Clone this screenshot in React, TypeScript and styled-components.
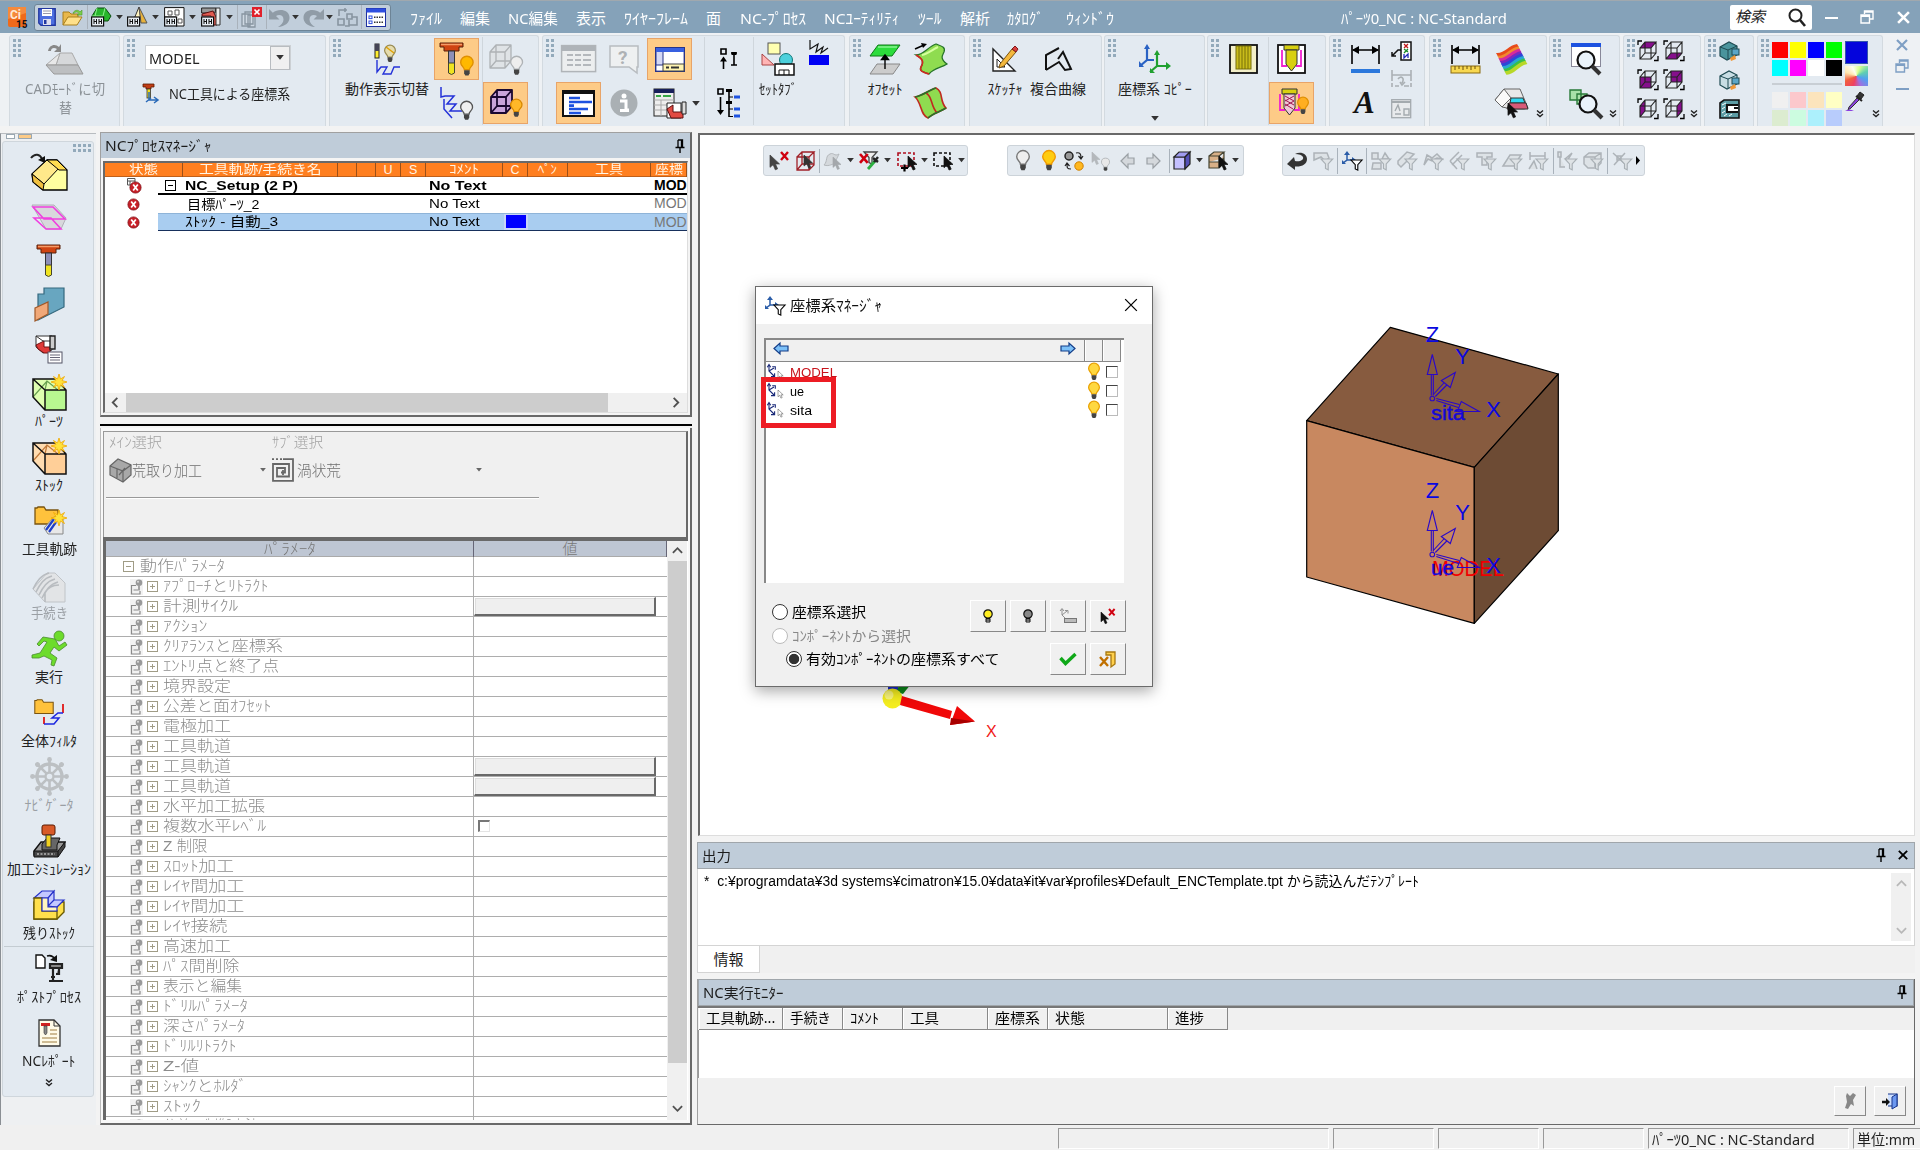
import React, { useLayoutEffect, useRef, useState } from "react";
import styled, { createGlobalStyle, css } from "styled-components";

const UI = `"Noto Sans", "Noto Sans CJK JP", sans-serif`;
const GOTHIC = `"Liberation Sans", "Noto Sans CJK JP", sans-serif`;

const Global = createGlobalStyle`
  * { box-sizing: border-box; }
  body { margin: 0; background: #f0f0f0; font-family: ${UI}; font-size: 14px; color: #222; overflow: hidden; }
  svg { display: block; flex: none; overflow: visible; }
`;

const FitBox = styled.span`
  display: block; flex: none; white-space: pre; line-height: inherit;
`;
const FitInner = styled.span`
  display: inline-block; transform-origin: 0 50%; white-space: pre; vertical-align: top;
`;
function Fit({ w, children }: { w: number; children: React.ReactNode }) {
  const ref = useRef<HTMLSpanElement>(null);
  const [scale, setScale] = useState(1);
  useLayoutEffect(() => {
    if (ref.current) setScale(w / ref.current.offsetWidth);
  }, [w, children]);
  return (
    <FitBox style={{ width: w }}>
      <FitInner ref={ref} style={{ transform: `scaleX(${scale})` }}>{children}</FitInner>
    </FitBox>
  );
}

/* ---------- icons ---------- */
type IP = { w: number; h: number; vb?: string; children?: React.ReactNode };
const Ico = ({ w, h, vb, children }: IP) => (
  <svg width={w} height={h} viewBox={vb || `0 0 ${w} ${h}`} fill="none">{children}</svg>
);
const G = ({ x = 0, y = 0, s = 1, children }: { x?: number; y?: number; s?: number; children: React.ReactNode }) => (
  <g transform={`translate(${x} ${y}) scale(${s})`}>{children}</g>
);
const CursorP = ({ x = 0, y = 0, s = 1, c = "#111", f }: { x?: number; y?: number; s?: number; c?: string; f?: string }) => (
  <G x={x} y={y} s={s}><path d="M0 0V13L3.3 10.2L5.6 15.6L8 14.6L5.7 9.4H10Z" fill={f || c} stroke={c} strokeWidth=".8" /></G>
);
const BulbP = ({ x = 0, y = 0, s = 1, c = "#ffd21c", b = "#e08a00" }: { x?: number; y?: number; s?: number; c?: string; b?: string }) => (
  <G x={x} y={y} s={s}>
    <path d="M3.8 12C3.8 9.5 .6 8.8 .6 5.6A5.4 5.4 0 0 1 11.4 5.6C11.4 8.8 8.2 9.5 8.2 12Z" fill={c} stroke={b} strokeWidth="1.2" />
    <path d="M3.6 12.3H8.4V15L7.4 17H4.6L3.6 15Z" fill="#444" />
  </G>
);
const FunnelP = ({ x = 0, y = 0, s = 1, c = "#a9b0b5", f = "#dfe3e6" }: { x?: number; y?: number; s?: number; c?: string; f?: string }) => (
  <G x={x} y={y} s={s}><path d="M0 0H13L8 5.5V12L5 10.5V5.5Z" fill={f} stroke={c} strokeWidth="1.3" /></G>
);
const RedX = ({ x = 0, y = 0, s = 1 }: { x?: number; y?: number; s?: number }) => (
  <G x={x} y={y} s={s}><path d="M0 0L7 8M7 0L0 8" stroke="#d00010" strokeWidth="2.4" /></G>
);
const Caret = ({ c = "#333", w = 8 }: { c?: string; w?: number }) => (
  <Ico w={w} h={w * 0.6} vb="0 0 8 5"><path d="M0 0H8L4 5Z" fill={c} /></Ico>
);
const Chevrons = () => (
  <Ico w={8} h={8}><path d="M1 .5L4 3L7 .5M1 4L4 6.5L7 4" stroke="#222" strokeWidth="1.4" /></Ico>
);
const Pin = () => (
  <Ico w={10} h={14}><path d="M3 1H7.5V8M3 1V8M6.5 1V8" stroke="#000" strokeWidth="1.3" /><path d="M.5 8.5H9.5M5 9V14" stroke="#000" strokeWidth="1.4" /></Ico>
);
const Cross = ({ s = 12, c = "#000", t = 2 }: { s?: number; c?: string; t?: number }) => (
  <Ico w={s} h={s} vb="0 0 12 12"><path d="M1 1L11 11M11 1L1 11" stroke={c} strokeWidth={t} /></Ico>
);
const Restore = ({ c = "#fff" }: { c?: string }) => (
  <Ico w={14} h={14}><path d="M4.5 4V1H13V9H10M1 5H9.5V13H1ZM1 6.2H9.5M4.5 2H13" stroke={c} strokeWidth="1.4" /></Ico>
);
const Chevron = ({ d, c = "#505050" }: { d: "l" | "r" | "u" | "d"; c?: string }) => {
  const p = { l: "M8 1L3 6L8 11", r: "M4 1L9 6L4 11", u: "M1 8.5L6 3.5L11 8.5", d: "M1 3.5L6 8.5L11 3.5" }[d];
  return <Ico w={11} h={11} vb="0 0 12 12"><path d={p} stroke={c} strokeWidth="2" /></Ico>;
};

const CiLogo = () => (
  <Ico w={19} h={21}>
    <rect width="18" height="20" rx="2" fill="#ef6a1a" />
    <path d="M0 0H18V6L0 12Z" fill="#f58a3c" />
    <text x="2" y="12" fontSize="12" fontWeight="700" fill="#ffe9d4" fontFamily="Roboto, sans-serif">Ci</text>
    <text x="8" y="21" fontSize="10" fontWeight="700" fill="#111" fontFamily="Roboto, sans-serif">15</text>
  </Ico>
);
const SaveI = () => (
  <Ico w={18} h={18}><path d="M.8.8H17.2V17.2H3L.8 15Z" fill="#4d6fe0" stroke="#2237a0" strokeWidth="1.4" /><rect x="4" y="1" width="10" height="7" fill="#fff" /><path d="M5 3H13M5 5.5H13" stroke="#99a" /><rect x="5" y="11" width="8" height="6" fill="#dde" /><rect x="6" y="12" width="2.5" height="4" fill="#2237a0" /></Ico>
);
const OpenI = () => (
  <Ico w={21} h={17}><path d="M1 16V3H7L9 5H16V8" fill="#e9b84c" stroke="#a87f1c" /><path d="M1 16L6 8H20L15 16Z" fill="#ffe08a" stroke="#a87f1c" /><path d="M11 4C13 0 17 1 18 3L20 1V6H15L17 4.5C16 2.5 13 2.5 12 4.5Z" fill="#7ccf4a" stroke="#4c9a28" strokeWidth=".6" /></Ico>
);
const Robot = ({ x = 0, y = 10 }: { x?: number; y?: number }) => (
  <g><rect x={x + .6} y={y} width="12" height="9" fill="#e8eef4" stroke="#111" strokeWidth="1.2" /><path d={`M${x + 3} ${y + 2}V${y + 7}M${x + 5.5} ${y + 2}V${y + 7}M${x + 3} ${y + 4.5}H${x + 5.5}M${x + 8} ${y + 2}V${y + 7}M${x + 10.5} ${y + 2}V${y + 7}M${x + 8} ${y + 4.5}H${x + 10.5}`} stroke="#111" /></g>
);
const NewPart = () => (<Ico w={21} h={20}><path d="M1 9L6 1H14L20 9L17 14H4Z" fill="#27b52b" stroke="#0c4d10" /><path d="M6 1L4 9H1M14 1L12 9H4" stroke="#8cf08c" /><Robot /></Ico>);
const NewAsm = () => (<Ico w={21} h={20}><path d="M12 0L7 12H14Z" fill="#fff3c0" stroke="#333" /><path d="M12 0L20 16H14Z" fill="#e8b23c" stroke="#555" /><Robot /></Ico>);
const NewDrw = () => (<Ico w={21} h={20}><path d="M.6.6H20V19H12V10H.6Z" fill="#fff" stroke="#111" /><path d="M4 4H8V8H4ZM11 3H15V8H11ZM14 12H18V16H14Z" stroke="#555" /><Robot /></Ico>);
const NewNC = () => (<Ico w={21} h={20}><path d="M.6 1H15L14 6H.6Z" fill="#999" stroke="#222" /><path d="M1 7L12 4L16 12V18H12L10 9H1Z" fill="#e05a50" stroke="#5a1010" /><path d="M15 1H19V18H15Z" fill="#eee" stroke="#333" /><Robot /></Ico>);
const CopyX = () => (<Ico w={21} h={21}><path d="M1 7H9V19H1ZM4 5H12V17H4ZM7 8H14V20H7Z" fill="#cfd9e3" stroke="#8794a0" strokeWidth="1.3" /><rect x="11" y="0" width="10" height="10" fill="#e0202a" /><path d="M13.5 2.5L18.5 7.5M18.5 2.5L13.5 7.5" stroke="#fff" strokeWidth="1.6" /></Ico>);
const Undo = ({ flip }: { flip?: boolean }) => (
  <Ico w={21} h={19}><g transform={flip ? "translate(21 0) scale(-1 1)" : undefined}><path d="M0 1V11.5H10.5L7 8C10 6 14.5 7 14.5 11.5C14.5 14.5 12 17 9 19C16 18.5 21 14.5 20.5 9C20 2 10-.5 3.8 4.8Z" fill="#909ca7" /></g></Ico>
);
const GreySwap = () => (<Ico w={21} h={19}><path d="M2 8V2H10M8 0V4M12 12V18H8M1 11H7V17H1ZM10 6H15V11H10ZM15 9H20V17H12" stroke="#8794a0" strokeWidth="1.6" /></Ico>);
const TableBlue = () => (<Ico w={20} h={19}><rect x=".5" y=".5" width="19" height="18" fill="#fff" stroke="#1d2fa0" /><rect x=".5" y=".5" width="19" height="4" fill="#2f4fe0" /><rect x="3" y="8" width="3" height="2.6" stroke="#2f4fe0" /><rect x="3" y="13" width="3" height="2.6" stroke="#2f4fe0" /><path d="M8 9.3H17M8 14.3H17" stroke="#333" strokeDasharray="1.5 1" strokeWidth="1.4" /></Ico>);

const CadI = () => (<Ico w={38} h={32}><path d="M2 8C3 2 9 0 13 4L15 1V9H8L11 6C8 4 5 5 5 8Z" fill="#888" /><path d="M14 10H26L32 22H10Z" fill="#d6d8da" stroke="#aaa" /><path d="M14 10L0 22L10 22Z" fill="#e8e8e8" stroke="#aaa" /><path d="M10 22H32L37 31H8L0 22Z" fill="#bdbfc1" stroke="#999" /></Ico>);
const ToolSmall = () => (<Ico w={16} h={21}><path d="M0 1H11V4H8V6H3V4H0Z" fill="#c23c14" stroke="#5a1a00" strokeWidth=".8" /><rect x="4" y="6" width="3.5" height="9" fill="#f5e020" stroke="#333" strokeWidth=".8" /><path d="M6 9V17H14M3 19L8 15M11 14L15 17L11 20" stroke="#2a6ab8" strokeWidth="1.5" /></Ico>);
const PathBulbBig = () => (<Ico w={29} h={31}><rect x="2" y="0" width="4" height="14" fill="#ffee30" stroke="#222" /><rect x="2" y="0" width="4" height="7" fill="#445" /><path d="M4 16V28L8 23H14L10 30H18L21 23H27" stroke="#2432d8" strokeWidth="1.4" /><BulbP x={11} y={1} c="#e5dcae" b="#988a50" /><path d="M13 3L21 9" stroke="#e0a000" strokeWidth="1.4" /></Ico>);
const ToolP = ({ x = 0, y = 0, s = 1 }: { x?: number; y?: number; s?: number }) => (
  <G x={x} y={y} s={s}><path d="M0 0H23V4H19V8H4V4H0Z" fill="#cf4412" stroke="#58200a" /><path d="M1 1.5H22" stroke="#f59c68" strokeWidth="1.5" /><rect x="8.5" y="8" width="6" height="13" fill="#8d8fb8" stroke="#333" /><path d="M8.5 20H14.5V30Q11.5 33 8.5 30Z" fill="#f0e420" stroke="#443" /></G>
);
const ToolBulb = () => (<Ico w={34} h={33}><ToolP /><BulbP x={20} y={13} s={1.15} c="#ffb800" b="#e09000" /></Ico>);
const ToolI = () => (<Ico w={24} h={32}><ToolP /></Ico>);
const PathBulb = () => (<Ico w={34} h={33}><path d="M1 0V10L5 9H14L7 17H16L10 24H22M4 12V22L12 31" stroke="#2432d8" strokeWidth="1.5" /><BulbP x={20} y={14} s={1.1} c="#f0f0f0" b="#555" /></Ico>);
const CubeP = ({ c = "#999", f = "none", s = 1, x = 0, y = 0, sw = 1.3 }: { c?: string; f?: string; s?: number; x?: number; y?: number; sw?: number }) => (
  <G x={x} y={y} s={s}><path d="M1 8L7 1H22V17L16 24H1Z" fill={f} /><path d="M1 8H16V24H1ZM1 8L7 1H22L16 8M22 1V17L16 24M7 1V17H22M7 17L1 24" stroke={c} strokeWidth={sw} strokeLinejoin="round" /></G>
);
const CubeGrey = () => (<Ico w={33} h={31}><CubeP c="#aeb2b5" f="#dfe3e6" /><BulbP x={21} y={12} s={1.1} c="#eee" b="#aeb2b5" /></Ico>);
const CubePurple = () => (<Ico w={31} h={28}><CubeP c="#1a0830" f="#c9a4da" sw={1.8} /><BulbP x={20} y={10} s={1.05} c="#ffb828" b="#d88800" /></Ico>);
const TableGrey = () => (<Ico w={36} h={28}><rect x=".6" y=".6" width="34" height="26" fill="#eceeef" stroke="#b0b4b8" strokeWidth="1.5" /><rect x="1" y="1" width="33" height="5" fill="#aeb3b8" /><path d="M6 10H12M14 10H20M22 10H30M6 15H12M14 15H20M22 15H30M6 20H12M14 20H20M22 20H30" stroke="#b4b8bc" strokeWidth="2" /></Ico>);
const HelpGrey = () => (<Ico w={30} h={29}><path d="M1 1H29V22H28V28L20 22H1Z" fill="#eef0f1" stroke="#b8bcc0" strokeWidth="1.5" /><text x="9" y="19" fontSize="19" fontWeight="700" fill="#aeb2b5" fontFamily="Roboto, sans-serif">?</text></Ico>);
const GanttI = () => (<Ico w={33} h={27}><rect x="1" y="1" width="31" height="25" fill="#fff" stroke="#111" strokeWidth="2" /><path d="M1 3H32" stroke="#111" strokeWidth="2" /><path d="M7 8H18M7 12H30M7 15.6H12M7 19H26M7 23H19" stroke="#1d52e0" strokeWidth="2.6" /></Ico>);
const InfoGrey = () => (<Ico w={28} h={28}><circle cx="14" cy="14" r="13.5" fill="#aab0b4" /><circle cx="14" cy="7" r="2.5" fill="#fff" /><path d="M10 12H16V21H19M10 21.5H19" stroke="#fff" strokeWidth="3" /></Ico>);
const WindowI = () => (<Ico w={30} h={25}><rect x=".7" y=".7" width="28.6" height="23.6" fill="#fff" stroke="#27348a" strokeWidth="1.4" /><rect x="1" y="1" width="28" height="4" fill="#3860e0" /><path d="M1 5V18H8V5" fill="#d4d8f4" stroke="#27348a" /><rect x="8" y="17" width="21" height="7" fill="#fff4b0" stroke="#444" /><path d="M11 20.5H14M16 20.5H24" stroke="#333" strokeWidth="2" /></Ico>);
const NcTable = () => (<Ico w={34} h={31}><rect x="1" y="1" width="20" height="27" fill="#eee" stroke="#222" /><rect x="1" y="1" width="20" height="4" fill="#18205a" /><path d="M3 8H8M10 8H18" stroke="#38a848" strokeWidth="2" /><path d="M1 12H21M1 17H21M1 22H21M8 12V28" stroke="#aaa" /><path d="M14 15H28V30H14Z" fill="#fff" stroke="#222" /><path d="M14 21L20 17V24H30V30H18Z" fill="#e24a42" stroke="#5a1010" /><path d="M29 14H33V26H29Z" fill="#ddd" stroke="#222" /></Ico>);
const LinkUp = () => (<Ico w={18} h={22}><path d="M1 1H6V6H1ZM3.5 21V11M11 5H17M14 5V17M11 17H17" stroke="#000" strokeWidth="1.6" /><path d="M0 13.5L3.5 8.5L7 13.5Z" fill="#000" /><rect x="11.5" y="4" width="5" height="3" fill="#000" /></Ico>);
const LinkTree = () => (<Ico w={24} h={30}><path d="M1 1H6V6H1ZM3.5 9V25M12 2V29" stroke="#000" strokeWidth="1.6" /><path d="M0 22L3.5 27L7 22Z" fill="#000" /><path d="M9 2.5H15M9 14.5H15" stroke="#000" strokeWidth="3" /><path d="M12 9H16M12 21H16M12 28.5H16" stroke="#000" /><path d="M17 9H23M17 21H23M17 28H23" stroke="#1d52e0" strokeWidth="3" /></Ico>);
const SetTab = () => (<Ico w={34} h={34}><rect x="7" y="1" width="12" height="11" fill="#ffffb0" stroke="#555" /><path d="M1 12V23H13Z" fill="#ffb4b4" stroke="#a44" /><circle cx="25" cy="18" r="6.5" fill="#4cd0dc" stroke="#177" /><path d="M14 22H33V33H14Z" fill="#fff" stroke="#111" strokeWidth="1.5" /><path d="M18 33V28H28V33M23 28V33" stroke="#111" /></Ico>);
const BlueBox = () => (<Ico w={20} h={25}><path d="M1 0V9L9 4L7 12L14 7L12 13L19 8" stroke="#111" strokeWidth="1.2" /><rect x="0" y="15" width="20" height="10" fill="#0000f4" /></Ico>);
const OffsetI = () => (<Ico w={32} h={31}><path d="M9 1H31L23 12H1Z" fill="#2cdc3c" stroke="#107818" /><path d="M9 3H28" stroke="#b4ffb8" /><path d="M8 20H31L24 30H1Z" fill="#ccc" stroke="#888" /><path d="M16 25V13M16 11L12.5 15.5H19.5Z" stroke="#000" strokeWidth="1.4" fill="#000" /></Ico>);
const SurfA = () => (<Ico w={33} h={32}><path d="M2 12C9 12 14 4 22 1C27 3 32 4 30 9C28 13 26 16 33 21C27 25 20 25 15 31C9 29 5 28 7 24C10 19 9 16 2 12Z" fill="#8fdc50" stroke="#27752a" strokeWidth="1.3" /><path d="M8 12C14 11 19 6 24 4" stroke="#d4ff9c" strokeWidth="2" /><path d="M2 12C9 16 10 19 7 24C5 28 9 29 15 31" stroke="#d02820" strokeWidth="1.6" /><path d="M1 6L10 2" stroke="#000" strokeWidth="1.5" /><path d="M7 0L13 1L9 5Z" fill="#000" /></Ico>);
const SurfB = () => (<Ico w={33} h={32}><path d="M1 10C8 9 15 3 22 1C30 5 25 14 32 21C26 25 19 26 14 31C6 28 8 16 1 10Z" fill="#8fdc50" stroke="#c02a20" strokeWidth="1.6" /><path d="M12 6C19 10 16 18 23 26" stroke="#c02a20" strokeWidth="1.6" /><path d="M1 10C8 9 15 3 22 1M14 31C19 26 26 25 32 21" stroke="#27752a" strokeWidth="1.6" /></Ico>);
const Sketch = () => (<Ico w={26} h={26}><path d="M1 3V25H23Z" fill="#fff" stroke="#222" strokeWidth="1.4" /><path d="M5 13V21H13Z" stroke="#222" /><path d="M8 18L20 3L24 6L12 20L7 22Z" fill="#f4b83c" stroke="#7a5410" /><path d="M20 3L23 0L26 3L24 6Z" fill="#d84040" stroke="#801818" /></Ico>);
const Composite = () => (<Ico w={28} h={26}><path d="M2 24V9L15 2M2 24L15 16L21 24L27 23L19 6L14 13" stroke="#111" strokeWidth="2" /></Ico>);
const UcsCopy = () => (<Ico w={32} h={30}><path d="M8 3V16L1 22M8 16H15" stroke="#2a62c4" strokeWidth="2.2" /><path d="M5 5L8 0L11 5ZM0 17V23H5Z" fill="#2a62c4" /><path d="M18 10V22L11 28M18 22H29" stroke="#20a030" strokeWidth="2.2" /><path d="M15 11L18 6L21 11ZM27 18L32 22L27 26ZM11 24V29H16Z" fill="#20a030" /></Ico>);
const Pocket = () => (<Ico w={29} h={30}><rect x="1" y="1" width="27" height="28" fill="#f3efc8" stroke="#111" strokeWidth="1.8" /><rect x="7" y="2" width="15" height="23" fill="#c9bc1a" stroke="#776e08" /><path d="M10 2V25M13 2V25M16 2V25M19 2V25" stroke="#776e08" /></Ico>);
const DrillP = ({ pat }: { pat?: boolean }) => (<><path d="M7 1H22V6H7Z" fill="#d8d010" stroke="#333" /><path d="M5 6V22H10M24 6V22H19" stroke="#f020d0" strokeWidth="1.8" /><path d="M9 6H20V20L14.5 27L9 20Z" fill={pat ? "#f0c8d8" : "#d8d010"} stroke="#333" />{pat && <path d="M10 8L19 13M10 12L19 17M10 16L18 21M19 8L10 13M19 13L10 18" stroke="#a01850" />}</>);
const DrillBox = () => (<Ico w={29} h={30}><rect x="1" y="1" width="27" height="28" fill="#fff" stroke="#111" strokeWidth="1.8" /><DrillP /></Ico>);
const DrillBulb = () => (<Ico w={34} h={30}><DrillP pat /><BulbP x={22} y={9} s={1} c="#ffae20" b="#e09000" /></Ico>);
const Dim = ({ c = "#2c78dc", ruler }: { c?: string; ruler?: boolean }) => (<Ico w={29} h={30}><path d="M1 1V20M28 1V20M2 6H27" stroke="#000" strokeWidth="1.6" /><path d="M1 6L8 2V10ZM28 6L21 2V10Z" fill="#000" />{ruler ? <g><rect x="0" y="22" width="29" height="7" fill="#f8d850" stroke="#8a6a10" /><path d="M4 22V26M8 22V25M12 22V26M16 22V25M20 22V26M24 22V25" stroke="#6a5008" /></g> : <rect x="0" y="25" width="29" height="4" fill={c} />}</Ico>);
const BigA = () => (<Ico w={24} h={26}><text x="1" y="23" fontSize="31" fontStyle="italic" fontWeight="700" fill="#111" fontFamily="Liberation Serif, serif">A</text></Ico>);
const NoteI = () => (<Ico w={21} h={20}><rect x="10" y="1" width="10" height="18" fill="#fff" stroke="#111" strokeWidth="1.5" /><path d="M13 3L17 7M17 3L13 7" stroke="#c01818" strokeWidth="1.3" /><path d="M13 8L17 11M17 8L13 12" stroke="#188a28" strokeWidth="1.3" /><path d="M13 13V17L17 13V17" stroke="#2028b8" strokeWidth="1.3" /><path d="M10 9H7L1 15M1 11V15H5" stroke="#111" strokeWidth="1.5" /></Ico>);
const DimGrey = () => (<Ico w={21} h={20}><path d="M1 0V11M20 0V11M1 5H20M1 13V17M20 13V17M4 16H8M13 16H18M7 9C10 5 14 8 11 13M9 12L11 15L14 12" stroke="#aab0b4" strokeWidth="1.6" /></Ico>);
const AGrey = () => (<Ico w={21} h={20}><rect x=".7" y=".7" width="19" height="18" fill="#e8eaec" stroke="#a4aaae" strokeWidth="1.3" /><path d="M1 3H20" stroke="#a4aaae" strokeWidth="2" /><path d="M4 15H10M13 10H18V16H13ZM4 12L7 6L9 12" stroke="#a4aaae" strokeWidth="1.4" /></Ico>);
const Rainbow = () => (<Ico w={33} h={31}>{["#e84a1a", "#f08a30", "#d82a9a", "#7a28c0", "#2a48d8", "#28a8d0", "#38c048", "#b8d828"].map((c, i) => <path key={c} d={`M${1 + i * 1.2} ${9 + i * 2.6}C${9 + i} ${10 + i * 2.6} ${14 + i} ${i * 2.6 + 1} ${22 + i * 1.2} ${i * 2.4}L${24 + i * 1.2} ${3.2 + i * 2.4}C${17 + i} ${3 + i * 2.6} ${12 + i} ${13 + i * 2.6} ${3 + i * 1.2} ${12.5 + i * 2.6}Z`} fill={c} />)}</Ico>);
const PickFace = () => (<Ico w={35} h={30}><path d="M1 12L10 1H26L34 20L30 21H18L8 19Z" fill="#e8e8e8" stroke="#666" /><path d="M10 1L1 12L8 19L17 10Z" fill="#fafafa" stroke="#666" /><path d="M17 10H29L31 15H16Z" fill="#30d8f0" stroke="#333" /><path d="M15 15H32L34 21H13Z" fill="#d85a78" stroke="#333" /><CursorP x={14} y={15} s={.95} /></Ico>);
const MagP = ({ x = 0, y = 0 }: { x?: number; y?: number }) => (<G x={x} y={y}><circle cx="10" cy="9" r="8.5" fill="#eaf3fb" stroke="#111" strokeWidth="2.2" /><path d="M16 15L24 23" stroke="#333" strokeWidth="4" /></G>);
const ZoomWin = () => (<Ico w={30} h={32}><rect x=".5" y=".5" width="29" height="23" fill="#fff" stroke="#889" /><rect width="30" height="4" fill="#1d52e0" /><MagP x={5} y={8} /></Ico>);
const ZoomObj = () => (<Ico w={34} h={31}><path d="M1 2H12V12H1ZM8 6H18V16H8Z" fill="#a8e0a8" stroke="#287a38" strokeWidth="1.4" /><MagP x={9} y={7} /></Ico>);
const FaceCube = ({ n }: { n: number }) => {
  const faces = ["M2 7L7 1H18L13 7Z", "M2 18L7 12H18L13 18Z", "M2 7H13V18H2Z", "M7 1H18V12H7Z", "M2 7L7 1V12L2 18Z", "M13 7L18 1V12L13 18Z"];
  return (<Ico w={21} h={20}><path d={faces[n]} fill="#850f8c" /><path d="M2 7H13V18H2ZM2 7L7 1H18L13 7M18 1V12L13 18M7 1V12H18M7 12L2 18" stroke="#222" strokeWidth="1.1" /><path d="M0 4V0H4M20 15V19.5H16" stroke="#000" strokeWidth="1.3" /></Ico>);
};
const TealCube = ({ n }: { n: number }) => (<Ico w={21} h={20}>{n === 2 ? <g><path d="M1 4L5 1H20V19H1Z" fill="#5c9ca4" stroke="#111" strokeWidth="1.6" /><path d="M19 6H8V13H19M15 9H19" stroke="#111" strokeWidth="2" fill="#fff" /><path d="M3 6L7 4M3 10L6 8M3 14L6 12M5 17L8 15M10 17L13 15" stroke="#fff" /></g> : <g><path d="M1 6L10 1L18 5V14L8 19L1 15Z" fill={n ? "#c8dde4" : "#4a949c"} stroke="#1e4a52" strokeWidth="1.2" /><path d="M1 6L9 9L18 5M9 9V18" stroke="#1e4a52" /><rect x="13" y="8" width="7" height="6" fill="#5aa6c8" stroke="#1e4a52" /><path d="M11 17L16 14L17 18L12 20Z" fill="#f09838" /></g>}</Ico>);
const Dropper = () => (<Ico w={20} h={20}><path d="M12 4L15 0L19 3L16 7Z" fill="#333" stroke="#222" /><path d="M11 4L17 9" stroke="#222" strokeWidth="2" /><path d="M12 6L4 15L3 18L6 16L14 8Z" fill="#8a40e0" stroke="#333" /><path d="M0 19Q4 16 9 19Z" fill="#8a40e0" /></Ico>);

/* view tool strips */
const SelX = () => (<Ico w={20} h={20}><CursorP x={0} y={4} s={.95} c="#444" /><RedX x={11} y={1} /></Ico>);
const SelCube = () => (<Ico w={20} h={20}><path d="M1 6H13V19H1ZM1 6L6 1H18L13 6M18 1V14L13 19M6 1V13H18M6 13L1 19" stroke="#a02028" strokeWidth="1.3" /><CursorP x={8} y={4} s={.85} c="#333" /></Ico>);
const SelSurf = () => (<Ico w={20} h={20}><path d="M1 14C5 10 2 5 7 3C11 1 11 6 16 3C14 8 12 9 14 13C9 12 7 16 1 14Z" fill="#d4d8dc" stroke="#b4b8bc" /><CursorP x={10} y={6} s={.8} c="#a4a8ac" /></Ico>);
const SelFilter = () => (<Ico w={20} h={20}><FunnelP x={4} y={1} c="#444" f="#eee" /><RedX x={0} y={3} s={1.1} /><path d="M8 18L15 10" stroke="#2cb040" strokeWidth="2.8" /><path d="M14 11L18 6M13 7L18 11" stroke="#222" strokeWidth="2.4" /></Ico>);
const SelRect = ({ plus }: { plus?: boolean }) => (<Ico w={21} h={20}><rect x="1" y="2" width="16" height="13" stroke={plus ? "#b01020" : "#111"} strokeWidth="1.6" strokeDasharray="3 2" /><CursorP x={11} y={5} s={.9} />{plus && <path d="M4 17H11M7.5 13.5V20.5" stroke="#000" strokeWidth="2.2" />}</Ico>);
const BulbI = ({ c, b }: { c?: string; b?: string }) => (<Ico w={14} h={21} vb="0 0 12 17.5"><BulbP c={c} b={b} /></Ico>);
const BulbSwap = () => (<Ico w={20} h={20}><circle cx="5" cy="5" r="4" fill="#999" stroke="#222" strokeWidth="1.5" /><circle cx="15" cy="15" r="4.2" fill="#ffb820" stroke="#d08000" /><path d="M12 2C16 1 17 3 17 7M14.5 5L17 8L19 5M7 18C3 18 3 17 3 13M1 15L3 12L5.5 15" stroke="#222" strokeWidth="1.2" /></Ico>);
const BulbSel = () => (<Ico w={19} h={20}><CursorP x={0} y={1} s={.8} c="#b4b8bc" /><BulbP x={9} y={7} s={.75} c="#e8e8e8" b="#b0b4b8" /></Ico>);
const ArrowG = ({ r }: { r?: boolean }) => (<Ico w={15} h={18}><g transform={r ? "translate(15 0) scale(-1 1)" : undefined}><path d="M1 9L8 2V6H14V12H8V16Z" fill="#d4d8dc" stroke="#9aa0a5" strokeWidth="1.2" /></g></Ico>);
const ShadeCube = () => (<Ico w={18} h={19}><path d="M1 6H12V18H1Z" fill="#c4c0ff" stroke="#222" strokeWidth="1.2" /><path d="M1 6L6 1H17L12 6Z" fill="#a09cf0" stroke="#222" strokeWidth="1.2" /><path d="M17 1V13L12 18V6Z" fill="#5450b8" stroke="#222" strokeWidth="1.2" /></Ico>);
const WoodCube = () => (<Ico w={20} h={20}><path d="M1 5H11V17H1ZM1 5L6 1H16L11 5M16 1V12L11 17M1 11H11L16 7" stroke="#443" fill="#d8b088" strokeWidth="1.2" /><CursorP x={11} y={5} s={.9} /></Ico>);
const HookArrow = () => (<Ico w={20} h={18}><path d="M0 12L7 5L8 9C13 10 17 8 16 5C15 3 12 2 8 2C14-1 20 2 20 7C20 12 15 15 8 14.5V18Z" fill="#333" /></Ico>);
const FilterG = ({ d }: { d: string }) => (<Ico w={20} h={20}><path d={d} stroke="#adb3b8" strokeWidth="1.5" fill="#dde2e6" /><FunnelP x={8} y={8} s={.9} /></Ico>);
const UcsFilter = ({ w = 20 }: { w?: number }) => (<Ico w={w} h={w} vb="0 0 20 20"><path d="M5 2V9L1 12M5 9H13" stroke="#2a5ca8" strokeWidth="1.5" /><path d="M2 4L5 0L8 4ZM10 6L14 9L10 11ZM0 9V13H4Z" fill="#2a5ca8" /><FunnelP x={9} y={9} s={.85} c="#000" f="#fff" /></Ico>);

/* left column icons */
const L1 = () => (<Ico w={37} h={37}><path d="M1 20L16 6H26L36 16V36H12L2 28Z" fill="#ffffa0" stroke="#000" strokeWidth="1.3" /><path d="M16 6L28 14L13 30L1 20Z" fill="#ffe98a" stroke="#000" strokeWidth="1" /><path d="M16 6H26L36 16H28Z" fill="#ffdc50" stroke="#000" strokeWidth="1" /><path d="M1 20L13 30L12 36L2 28Z" fill="#f0c040" stroke="#000" strokeWidth="1" /><path d="M0 4C4-1 9 0 11 5" stroke="#222" strokeWidth="2" /><path d="M7 6L14 9L14 2Z" fill="#111" /></Ico>);
const L2 = () => (<Ico w={36} h={26}><path d="M1 1H23L35 14L30 25H15Z" fill="#d8d8dc" stroke="#b0b0b8" /><path d="M2 3H22L34 15H13Z M3 14H20L30 25H15Z" stroke="#f040e0" strokeWidth="1.6" /></Ico>);
const L4 = () => (<Ico w={31} h={35}><path d="M4 7H10V1H30V20L4 33Z" fill="#68a6c0" stroke="#34687e" strokeWidth="1.2" /><path d="M1 21L14 15V27L1 34Z" fill="#f0a878" stroke="#a05828" strokeWidth="1.2" /></Ico>);
const L5 = () => (<Ico w={28} h={28}><path d="M1 1H17V15L8 18L1 12Z" fill="#fff" stroke="#333" /><path d="M1 10L9 6V12H15V18H9L3 14Z" fill="#e03a38" stroke="#701010" /><path d="M1 1L8 6H17" stroke="#333" /><path d="M15 1H20V14H15Z" fill="#ccc" stroke="#222" strokeWidth="1.4" /><rect x="13" y="17" width="14" height="11" fill="#fff" stroke="#556" /><path d="M15 20H25M15 22.5H25M15 25H25" stroke="#667" /></Ico>);
const StarP = ({ x, y }: { x: number; y: number }) => (<G x={x} y={y}><path d="M0-8L1.5-3L5.5-5.5L3-1.5L8 0L3 1.5L5.5 5.5L1.5 3L0 8L-1.5 3L-5.5 5.5L-3 1.5L-8 0L-3-1.5L-5.5-5.5L-1.5-3Z" fill="#ffe23c" stroke="#f0a800" strokeWidth=".8" /></G>);
const BoxNew = ({ a, b, l }: { a: string; b: string; l: string }) => (<Ico w={37} h={36}><path d="M2 4H25L35 15V35H14L2 22Z" fill={a} /><path d="M14 15H35V35H14Z" fill={b} /><path d="M2 22L16 6L27 15M16 6L14 15" stroke={l} strokeWidth="1.2" /><path d="M2 4H25L35 15V35H14L2 22ZM2 4L14 15V35M14 15H35" stroke="#111" strokeWidth="1.5" /><StarP x={28} y={7} /></Ico>);
const FolderP = () => (<path d="M1 4V2H3L4 1H10L12 4H24V18H1Z" fill="#ffc23c" stroke="#7a5410" strokeWidth="1.3" />);
const L8 = () => (<Ico w={31} h={29}><FolderP /><path d="M10 22L20 11H29V28H14Z" fill="#e8e8e8" stroke="#888" /><path d="M12 24L20 13M15 26L22 16" stroke="#1d3fc8" strokeWidth="2.2" /><StarP x={25} y={12} /></Ico>);
const L9 = () => (<Ico w={36} h={36}><path d="M2 22L16 6H24L34 16V35H14Z" fill="#e2e4e6" stroke="#c0c4c8" /><path d="M2 22C6 14 10 8 18 6M5 25C9 17 13 11 21 9M8 28C12 20 16 14 24 12M11 31C15 23 19 17 27 15M14 35V26C17 20 22 18 28 18" stroke="#b8bcc0" strokeWidth="1.6" /></Ico>);
const RunI = () => (<Ico w={37} h={36}><circle cx="28" cy="5" r="5" fill="#6ddc2c" stroke="#4a8a30" strokeWidth=".8" /><path d="M12 6L24 8L28 15L34 11L36 14L28 20L23 16L19 22L26 27L23 35L20 34L21 29L13 25L8 27H1V24L9 22L16 11L13 10L8 15L6 13Z" fill="#6ddc2c" stroke="#4a8a30" strokeWidth=".8" /></Ico>);
const FilterFolder = () => (<Ico w={31} h={27}><G s={.8}><FolderP /></G><path d="M29 5V14M10 18V25" stroke="#e01818" strokeWidth="1.8" /><path d="M10 25H20L25 19H18L24 14H29" stroke="#1d28e0" strokeWidth="1.5" /></Ico>);
const Wheel = () => (<Ico w={39} h={39} vb="-19.5 -19.5 39 39"><circle r="12.5" stroke="#bcc0c3" strokeWidth="3.4" /><circle r="4" stroke="#bcc0c3" strokeWidth="2.4" />{[0, 45, 90, 135].map(a => <g key={a} transform={`rotate(${a})`}><path d="M-18 0H-4M4 0H18" stroke="#bcc0c3" strokeWidth="2.6" /><circle cx="-17" r="2.4" fill="#bcc0c3" /><circle cx="17" r="2.4" fill="#bcc0c3" /></g>)}</Ico>);
const SimI = () => (<Ico w={33} h={34}><path d="M1 27L8 18H32L25 31H1Z" fill="#999" stroke="#111" strokeWidth="1.4" /><path d="M1 27H25V33H1ZM25 27L32 18V23L25 33" fill="#444" stroke="#111" /><path d="M9 20L14 14H27L24 21V26H9Z" fill="#666" stroke="#111" /><path d="M4 30H22" stroke="#eee" strokeDasharray="2 1.5" /><rect x="9" y="1" width="13" height="10" rx="2" fill="#d85a28" stroke="#5a1a00" /><rect x="13" y="11" width="5" height="12" fill="#f0d020" stroke="#333" /></Ico>);
const RestI = () => (<Ico w={32} h={30}><path d="M1 12V29H24L31 22V12H18L8 10Z" fill="#ffe04c" stroke="#6a5a00" strokeWidth="1.4" /><path d="M1 8L9 1H21L15 8ZM15 8L21 1V10L15 16ZM15 16L21 10H31L24 17Z" fill="#c4c8ff" stroke="#2430c8" strokeWidth="1.2" /><path d="M1 8H9V21H24V29H1Z" fill="#ffe04c" stroke="#6a5a00" strokeWidth="1.3" /><path d="M9 8V21H24V17H15V8Z" fill="#fff4c0" stroke="#2430c8" strokeWidth="1.2" /></Ico>);
const PostI = () => (<Ico w={28} h={29}><path d="M1 1H7L10 4V14H1Z" fill="#fff" stroke="#111" strokeWidth="1.4" /><path d="M12 2C15 1 18 2 20 5" stroke="#111" strokeWidth="1.6" /><path d="M15 6L22 8V1Z" fill="#111" /><path d="M15 10H27V14H15ZM18 14V26M24 14V20H21M14 27H28M16 23H20" stroke="#222" strokeWidth="2.2" fill="#888" /></Ico>);
const ReportI = () => (<Ico w={23} h={28}><path d="M1 1H16L22 7V27H1Z" fill="#fffbe8" stroke="#333" strokeWidth="1.3" /><path d="M16 1V7H22" stroke="#333" /><path d="M3 4H12V7H3Z" fill="#d02020" /><path d="M6 7H9V14L7.5 16L6 14Z" fill="#888" stroke="#333" strokeWidth=".6" /><path d="M12 11H19M12 15H19M4 19H19M4 23H19" stroke="#c0a878" strokeWidth="1.3" /></Ico>);

/* panel icons */
const ErrDot = ({ grid }: { grid?: boolean }) => (<Ico w={grid ? 15 : 13} h={grid ? 16 : 13}>{grid && <path d="M.5.5H8V7H.5ZM.5 3H8M3 3V7" stroke="#555" fill="#fff" />}<G x={grid ? 2 : 0} y={grid ? 3 : 0}><circle cx="6.5" cy="6.5" r="5.6" fill="#c82028" stroke="#801018" strokeWidth=".8" /><path d="M4.2 3.5L8.8 9.5M8.8 3.5L4.2 9.5" stroke="#fff" strokeWidth="1.8" /></G></Ico>);
const RoughI = () => (<Ico w={23} h={25}><path d="M1 8L9 1L22 7V17L14 24L1 17Z" fill="#a8a8a8" stroke="#666" strokeWidth="1.2" /><path d="M1 8L14 13L22 7M14 13V24M8 11V20M10 17L16 10" stroke="#666" strokeWidth="1.2" /></Ico>);
const Spiral = () => (<Ico w={22} h={24}><path d="M0 1.2H2M4 1.2H6M8 1.2H10M11 1.2H21V22.8H1V6H17V18.5H5V10H13V14.5H9M11 12V17" stroke="#666" strokeWidth="1.8" /></Ico>);
const LockPin = () => (<Ico w={13} h={16}><rect width="13" height="16" fill="#f2f2f2" /><path d="M6 6.5H1.5V15H10V12M3.5 11H8" stroke="#8a8a8a" strokeWidth="1.2" /><circle cx="9" cy="3.8" r="3.3" fill="#999" /><circle cx="8" cy="2.8" r="1" fill="#ddd" /><path d="M9 7V11.5" stroke="#999" strokeWidth="1.8" /></Ico>);
const Tree = ({ plus, c = "#a09c86" }: { plus?: boolean; c?: string }) => (<Ico w={12} h={12}><rect x=".5" y=".5" width="10" height="10" fill="#fff" stroke={c} /><path d={plus ? "M3 5.5H8M5.5 3V8" : "M3 5.5H8"} stroke={c} /></Ico>);
const BlueArrow = ({ r }: { r?: boolean }) => (<Ico w={16} h={13}><g transform={r ? "translate(16 0) scale(-1 1)" : undefined}><path d="M1 6.5L7 1V4H15V9H7V12Z" fill="#7cc0f8" stroke="#123c88" strokeWidth="1.2" /></g></Ico>);
const UcsRow = () => (<Ico w={17} h={16}><path d="M2 1V7L7 12M2 7L7 4" stroke="#182878" strokeWidth="1.1" /><path d="M.3 3.2L2 .6L3.7 3.2M5.2 2.8H8.3V5.8M4 12.6H7.6V9.2" stroke="#182878" strokeWidth="1.1" /><CursorP x={11} y={7} s={.52} c="#222" f="#fff" /></Ico>);
const SmallBulb = ({ c }: { c: string }) => (<Ico w={10} h={14}><circle cx="5" cy="5" r="4.2" fill={c} stroke="#111" strokeWidth="1.2" /><path d="M3 9.5H7V13H3ZM3 11H7" stroke="#111" fill="#ccc" /></Ico>);
const UcsGrey = () => (<Ico w={17} h={16}><path d="M2 1V7L5 10M2 7L7 3M0 3L2 .5L4 3M5 2.5H8V5.5" stroke="#909090" /><rect x="4.5" y="10.5" width="12" height="4" fill="#bbb" stroke="#777" /></Ico>);
const CursorX = () => (<Ico w={16} h={15}><CursorP x={1} y={3} s={.75} /><RedX x={9} y={0} s={.8} /></Ico>);
const Check = () => (<Ico w={18} h={14}><path d="M1.5 6L6.5 11.5L16.5 2" stroke="#0fa818" strokeWidth="3.4" /></Ico>);
const ExitI = () => (<Ico w={18} h={17}><path d="M7 1H16V13L12 16V4H7Z" fill="#ffd04c" stroke="#a87810" strokeWidth="1.3" /><path d="M1 6L9 15M9 6L1 15" stroke="#c07000" strokeWidth="2.4" /></Ico>);
const ExitBlue = () => (<Ico w={17} h={17}><path d="M6 1H15V13H6" fill="#cfe0ff" stroke="#17348a" strokeWidth="1.2" /><path d="M10 4L15 1V13L10 16Z" fill="#6c98f0" stroke="#17348a" /><path d="M0 9H5" stroke="#111" strokeWidth="2.5" /><path d="M4 5L8 9L4 13Z" fill="#111" /></Ico>);
const StopGrey = () => (<Ico w={13} h={16}><path d="M3 0L6 3L9 0L12 2L9 7L10 13L7 11L4 16L1 15L3 9L2 3Z" fill="#888" /></Ico>);

/* ---------- layout ---------- */
const Screen = styled.div`
  width: 1920px; height: 1150px; display: flex; flex-direction: column; background: #f0f0f0; overflow: hidden;
`;
const TitleBar = styled.header`
  height: 33px; flex: none; display: flex; align-items: center; background: #85a2b9; border-top: 1px solid #a0a8ae; color: #fff; padding-left: 8px; font-size: 15px;
`;
const QuickAccess = styled.div`
  height: 27px; width: 357px; margin-left: 7px; background: #c1cedb; border: 1px solid #6d8496; border-radius: 3px; display: flex; align-items: center; flex: none; padding-left: 3px;
`;
const At = styled.div<{ $ml?: number; $w?: number }>`
  margin-left: ${p => p.$ml || 0}px; ${p => p.$w && css`width: ${p.$w}px;`} flex: none; display: flex; align-items: center; justify-content: center;
`;
const VSep = styled.i<{ $ml?: number; $h?: number }>`
  width: 1px; height: ${p => p.$h || 24}px; background: #a9b2bb; margin-left: ${p => p.$ml || 0}px; flex: none;
`;
const SearchBox = styled.div`
  width: 82px; height: 25px; background: #fff; color: #222; font-style: italic; display: flex; align-items: center; justify-content: space-between; padding: 0 6px 0 5px; font-size: 15px; line-height: 20px; border-radius: 2px;
  & > span { margin-top: -3px; }
`;
const Ribbon = styled.div`
  height: 93px; flex: none; display: flex; padding: 2px 0 0 9px; background: #eef1f4; line-height: 19px; font-size: 14px;
`;
const GroupBox = styled.section<{ $w: number; $gap: number }>`
  position: relative; width: ${p => p.$w}px; margin-right: ${p => p.$gap}px; height: 91px; background: #e3eaf1; border: 1px solid #d3dae0; border-bottom: 0; border-radius: 3px 3px 0 0; flex: none; display: flex;
`;
const Grip = styled.i`
  position: absolute; left: 3px; top: 3px; width: 8px; height: 18px;
  background: linear-gradient(90deg, #93aabb 3px, transparent 3px) 0 0 / 5px 3px repeat;
  mask: linear-gradient(#000 3px, transparent 3px) 0 0 / 5px 5px;
`;
const Col = styled.div<{ $ml?: number; $w: number; $line?: boolean; $small?: boolean }>`
  width: ${p => p.$w}px; margin-left: ${p => p.$ml || 0}px; padding-top: ${p => (p.$small ? 0 : 2)}px; flex: none; display: flex; flex-direction: column; gap: ${p => (p.$small ? 0 : 2)}px; align-items: center;
  ${p => p.$line && css`box-shadow: -2px 0 0 -1px #cfd6dc;`}
`;
const Cell = styled.div<{ $on?: boolean; $h?: number }>`
  width: 100%; height: ${p => p.$h || 42}px; flex: none; display: flex; align-items: center; justify-content: center;
  ${p => p.$on && css`background: #fdcb87; border: 1px solid #e8a468;`}
`;
const RLabel = styled.div<{ $dim?: boolean }>`
  height: 17px; display: flex; flex-direction: column; align-items: center; color: ${p => (p.$dim ? "#8b9196" : "#222")}; margin-top: -3px;
`;
const Corner = styled.div`
  position: absolute; right: 2px; bottom: 8px;
`;
const Combo = styled.div`
  width: 146px; height: 25px; border: 1px solid #ccd0d4; background: #fff; display: flex; align-items: center; justify-content: space-between; padding-left: 3px; font-size: 15px; margin-top: 7px;
  & > span { padding-top: 2px; }
`;
const ComboBtn = styled.div`
  width: 20px; height: 24px; background: #f0f0f0; border: 1px solid #b8bcc0; display: flex; align-items: center; justify-content: center;
`;
const HRow = styled.div<{ $mt?: number; $gap?: number }>`
  display: flex; align-items: center; gap: ${p => p.$gap || 0}px; margin-top: ${p => p.$mt || 0}px; width: 100%;
`;
const SwatchPanel = styled.div`
  margin-left: 14px; padding-top: 6px; display: grid; grid-template-columns: repeat(4, 16px) 23px; grid-template-rows: 16px 16px 12px 16px 16px; gap: 2px; height: 90px;
`;
const Swatch = styled.i<{ $c: string }>`background: ${p => p.$c};`;
const SwatchSide = styled.div<{ $row: string }>`
  grid-column: 5; grid-row: ${p => p.$row}; padding-left: 1px; display: flex; flex-direction: column; gap: 2px;
`;
const Current = styled.i`width: 23px; height: 23px; background: #0404dc; border: 1px solid #35a; margin-top: -1px;`;
const Rainbowed = styled.i`width: 23px; height: 20px; background: conic-gradient(from 20deg, #d8ff90, #60d0b0, #50a0f0, #a070e0, #f04060, #f06040, #ffe8b0, #fffff0, #d8ff90);`;
const SwatchRule = styled.i`grid-column: 1 / 5; height: 2px; background: #c8ced4; align-self: center;`;
const WinMini = styled.div`
  display: flex; flex-direction: column; align-items: center; gap: 8px; padding: 4px 0 0 1px; width: 40px; height: 91px;
`;
const Dash = styled.i<{ $c: string; $mt: number }>`width: 13px; height: 2px; background: ${p => p.$c}; margin-top: ${p => p.$mt}px;`;

const Workspace = styled.main`flex: 1; display: flex; min-height: 0; padding-top: 6px; background: #f3f3f3;`;
const LeftBar = styled.nav`
  width: 96px; margin: 1px 4px 0 0; border-left: 1px solid #8a8f94; border-top: 1px solid #b8bcc0; display: flex; flex-direction: column; flex: none; background: #eef0f2; padding-left: 1px;
`;
const DockTabs = styled.div`height: 7px; display: flex; gap: 3px; padding: 0 0 0 4px; flex: none;`;
const DockTab = styled.i<{ $w: number; $c: string }>`width: ${p => p.$w}px; height: 5px; background: ${p => p.$c}; border: 1px solid #9aa8b2;`;
const LeftInner = styled.div`
  width: 92px; height: 956px; background: #e3eaf1; border: 1px solid #cfd6dc; border-radius: 3px; display: flex; flex-direction: column; align-items: center; position: relative; padding: 9px 0 0 2px;
`;
const HGrip = styled.i`
  position: absolute; right: 2px; top: 2px; width: 18px; height: 8px; background: linear-gradient(90deg, #93aabb 3px, transparent 3px) 0 0 / 5px 3px; mask: linear-gradient(#000 3px, transparent 3px) 0 0 / 5px 5px;
`;
const Item = styled.div<{ $label?: boolean; $dim?: boolean; $line?: boolean }>`
  width: 90px; height: ${p => (p.$label ? 64 : 44)}px; flex: none; display: flex; flex-direction: column; align-items: center; font-size: 14px; line-height: 14px; color: ${p => (p.$dim ? "#9a9fa4" : "#222")};
  ${p => p.$line && css`box-shadow: 0 -1px 0 #c4ccd2;`}
`;
const ItemIcon = styled.div`height: 43px; display: flex; align-items: center; flex: none;`;
const More = styled.div`margin-top: 4px;`;

const LeftPanels = styled.div`width: 592px; flex: none; margin-right: 5px; display: flex; flex-direction: column;`;
const Panel = styled.section<{ $h: number }>`
  height: ${p => p.$h}px; flex: none; border: 1px solid #a0a0a0; border-right: 2px solid #696969; border-bottom: 2px solid #696969; background: #f4f4f4; display: flex; flex-direction: column;
`;
const PanelHead = styled.div`
  height: 25px; flex: none; background: #bfccd9; display: flex; align-items: center; justify-content: space-between; padding: 0 5px 0 4px; font-size: 14px; line-height: 22px; color: #1c1c1c;
`;
const HeadTools = styled.div<{ $gap?: number }>`display: flex; gap: ${p => p.$gap || 0}px; align-items: center;`;
const Sunken = styled.div`
  margin: 3px 2px 2px 2px; flex: 1; border: 2px solid #696969; border-right: 1px solid #ddd; border-bottom: 1px solid #ddd; background: #fff; display: flex; flex-direction: column; overflow: hidden; font-family: ${GOTHIC};
`;
const ProcHead = styled.div`
  display: grid; grid-template-columns: 78px 155px 19px 19px 25px 25px 77px 25px 40px 83px 36px; height: 14px; background: #ff7f1f; border-bottom: 1px solid #c0601a; color: #fff4e4; font-size: 12.5px; line-height: 14px; flex: none;
`;
const ProcTh = styled.div`border-right: 1px solid #9a5018; display: flex; justify-content: center;`;
const ProcRow = styled.div<{ $h: number; $bold?: boolean }>`
  display: grid; grid-template-columns: 53px 1fr; height: ${p => p.$h}px; line-height: ${p => p.$h - 1}px; font-size: 13px; font-weight: ${p => (p.$bold ? 700 : 400)}; color: #000; flex: none;
`;
const ProcStatus = styled.div`display: flex; align-items: center; padding-left: 22px;`;
const ProcCells = styled.div<{ $bold?: boolean; $sel?: boolean }>`
  display: grid; grid-template-columns: 271px 74px 25px 126px 33px; overflow: hidden; border-bottom: 0 solid #000;
  ${p => p.$bold && css`border-bottom-width: 2px; line-height: 17px;`}
  ${p => p.$sel && css`background: #a9cdf0; border-bottom: 1px solid #17305c; line-height: 16px; border-top: 1px solid #8fb4d8;`}
`;
const ProcName = styled.div`display: flex; align-items: center; padding-left: 7px; gap: 8px;`;
const Blank = styled.i<{ $w: number }>`width: ${p => p.$w}px; flex: none;`;
const ColorChip = styled.i`width: 24px; height: 17px; background: #0000ff; border: 2px solid #c8d4f8; display: block; margin: -1px 0 0 1px;`;
const ModCell = styled.div<{ $dim?: boolean }>`color: ${p => (p.$dim ? "#777" : "#000")}; font-size: 14px;`;
const HScroll = styled.div`margin-top: auto; height: 19px; background: #f0f0f0; display: flex; align-items: center; padding: 0 6px 0 5px; flex: none;`;
const HThumb = styled.i`width: 482px; height: 19px; background: #cdcdcd; margin: 0 auto 0 5px;`;

const Divider = styled.i`height: 2px; background: #000; margin: 7px 0 2px; flex: none;`;
const LowerPanel = styled.section`
  height: 697px; flex: none; border-right: 2px solid #696969; border-bottom: 2px solid #696969; border-left: 1px solid #bbb; display: flex; flex-direction: column; padding: 3px 2px 3px 2px; background: #f8f8f8;
`;
const SelectArea = styled.div`
  height: 106px; flex: none; border: 1px solid #999; border-right: 2px solid #696969; border-bottom: 0; background: #f0f0f0; padding: 2px 0 0 5px; font-family: ${GOTHIC}; font-size: 14px; line-height: 17px; color: #a0a0a0; font-weight: 300;
`;
const SelLine = styled.div`display: flex; align-items: center; height: 17px;`;
const SelValues = styled.div`display: flex; align-items: center; height: 28px; margin-top: 5px; font-size: 15px; color: #6f6f6f;`;
const Rule = styled.i`display: block; width: 433px; height: 2px; border-top: 1px solid #999; background: #fff; margin: 13px 0 0 -3px;`;
const ParamFrame = styled.div`flex: 1; min-height: 0; display: flex; border-top: 4px solid #696969; border-left: 3px solid #696969; overflow: hidden; background: #fff; font-family: ${GOTHIC};`;
const ParamTable = styled.div`width: 561px; flex: none; overflow: hidden; font-size: 15px; color: #8c8c8c; font-weight: 300;`;
const ParamHead = styled.div`display: grid; grid-template-columns: 368px 193px; height: 16px; background: #bec6d3; line-height: 15px; color: #777; box-shadow: inset 0 -1px 0 #aaa;`;
const ParamTh = styled.div`display: flex; justify-content: center; border-right: 1px solid #667;`;
const ParamRow = styled.div`display: grid; grid-template-columns: 368px 193px; height: 20px; line-height: 17px; border-bottom: 1px solid #adadad;`;
const ParamName = styled.div<{ $root?: boolean }>`
  display: flex; align-items: center; gap: 4px; padding-left: ${p => (p.$root ? 17 : 24)}px; border-right: 1px solid #adadad;
  & > span { margin-top: -2px; margin-left: ${p => (p.$root ? 1 : 0)}px; }
`;
const ParamBtn = styled.div`width: 182px; height: 19px; background: #efefef; border: 1px solid #fff; border-right: 2px solid #696969; border-bottom: 2px solid #696969; box-shadow: inset 1px 1px 0 #ddd;`;
const ParamChk = styled.div`width: 12px; height: 12px; margin: 3px 0 0 4px; border-top: 2px solid #777; border-left: 2px solid #777; border-right: 1px solid #e4e4e4; border-bottom: 1px solid #e4e4e4;`;
const VScroll = styled.div`width: 20px; background: #f0f0f0; display: flex; flex-direction: column; align-items: center; padding: 4px 0 6px;`;
const VThumb = styled.i`width: 19px; height: 502px; background: #cdcdcd; margin: 5px 0 auto;`;

const RightSide = styled.div`width: 1218px; flex: none; display: flex; flex-direction: column;`;
const Viewport = styled.section`
  position: relative; height: 703px; margin-top: 1px; flex: none; background: #fff; border-left: 2px solid #696969; border-top: 2px solid #696969; border-right: 1px solid #ddd; border-bottom: 1px solid #ddd; margin-left: 1px;
`;
const Strips = styled.div`display: flex; padding: 10px 0 0 63px;`;
const Strip = styled.div<{ $w: number; $ml?: number }>`
  width: ${p => p.$w}px; margin-left: ${p => p.$ml || 0}px; height: 31px; background: #e4eaf0; border: 1px solid #ccd3d9; border-radius: 3px; display: flex; align-items: center; flex: none;
`;
const Scene = styled.svg`position: absolute; left: 0; top: 0;`;

const Dialog = styled.div`
  position: absolute; left: 55px; top: 151px; width: 398px; height: 401px; background: #f0f0f0; border: 1px solid #6b6b6b; box-shadow: 0 4px 14px rgba(0,0,0,.35); font-family: ${GOTHIC};
`;
const DlgTitle = styled.div`height: 37px; background: #fff; display: flex; align-items: center; padding: 0 14px 0 9px; gap: 5px; font-family: ${UI}; font-size: 15px; line-height: 20px; color: #111; & > span { margin-top: -2px; } & > :last-child { margin-left: auto; margin-top: -2px; }`;
const List = styled.div`margin: 14px 0 0 8px; width: 360px; height: 245px; background: #fff; border: 2px solid #888; border-right: 0; border-bottom: 0;`;
const ListHead = styled.div`height: 22px; width: 355px; background: #f0f0f0; border-bottom: 1px solid #888; display: grid; grid-template-columns: 1fr 18px 18px;`;
const ListHeadMain = styled.div`display: flex; justify-content: space-between; align-items: flex-start; padding: 2px 8px 0 7px; border-right: 1px solid #888;`;
const ListHeadCell = styled.div`border-right: 1px solid #888; border-left: 1px solid #fff;`;
const ListRow = styled.div<{ $red?: boolean }>`height: 19px; display: flex; align-items: center; font-size: 13.5px; line-height: 19px; color: ${p => (p.$red ? "#c8141c" : "#000")}; text-decoration: ${p => (p.$red ? "underline" : "none")}; padding-left: 1px; & > div > span { padding-top: 1px; }`;
const RowTools = styled.div`margin-left: auto; width: 36px; display: flex; align-items: center; gap: 6px;`;
const MiniCheck = styled.i`width: 12px; height: 12px; border: 1px solid #444; border-right-color: #bbb; border-bottom-color: #bbb;`;
const Highlight = styled.div`position: absolute; left: 5px; top: 90px; width: 75px; height: 51px; border: 5px solid #ed1c24;`;
const DlgBottom = styled.div`display: flex; padding: 17px 0 0 16px; justify-content: space-between;`;
const Radios = styled.div`display: flex; flex-direction: column; gap: 7px; padding-top: 4px; width: 195px;`;
const Radio = styled.div<{ $dim?: boolean; $indent?: boolean }>`
  display: flex; align-items: center; gap: 4px; height: 16.5px; font-size: 14px; line-height: 16px; color: ${p => (p.$dim ? "#888" : "#000")}; padding-left: ${p => (p.$indent ? 14 : 0)}px;
`;
const Ring = styled.i<{ $on?: boolean; $dim?: boolean }>`
  width: 16px; height: 16px; flex: none; border-radius: 50%; border: 1px solid ${p => (p.$dim ? "#bbb" : "#333")}; background: ${p => (p.$on ? "radial-gradient(circle, #333 0 4.8px, #fff 5.6px)" : "#fff")};
`;
const BtnGrid = styled.div`display: grid; grid-template-columns: repeat(4, 36px); grid-auto-rows: 32px; column-gap: 4px; row-gap: 11px; margin-right: 26px;`;
const Btn = styled.div<{ $c?: number; $w?: number; $h?: number }>`
  ${p => p.$c && css`grid-column: ${p.$c};`} ${p => p.$w && css`width: ${p.$w}px; height: ${p.$h}px;`}
  display: flex; align-items: center; justify-content: center; background: #f0f0f0; border: 1px solid #fff; border-right: 1px solid #888; border-bottom: 1px solid #888;
`;

const OutPanel = styled.section`height: 131px; margin-top: 6px; flex: none; display: flex; flex-direction: column;`;
const BarHead = styled(PanelHead)`height: 27px; border: 1px solid #a0a6ab; padding-left: 4px; padding-right: 6px; & > svg, & > div { margin-top: -2px; }`;
const OutBody = styled.div`height: 77px; background: #fff; border: 1px solid #d4d4d4; border-top: 0; display: flex; justify-content: space-between; padding: 4px 3px 4px 6px; font-family: ${GOTHIC}; font-size: 14px; line-height: 17px; color: #000;`;
const OutScroll = styled.div`width: 20px; background: #f0f0f0; display: flex; flex-direction: column; justify-content: space-between; align-items: center; padding: 5px 0;`;
const OutTabs = styled.div`height: 27px; display: flex; background: #f0f0f0;`;
const OutTab = styled.div`width: 63px; background: #fff; border: 1px solid #d4d4d4; border-top: 0; display: flex; justify-content: center; align-items: center; font-size: 15px; line-height: 22px; color: #222;`;
const Monitor = styled.section`height: 146px; margin-top: 6px; flex: none; display: flex; flex-direction: column; border-right: 1px solid #696969; border-bottom: 1px solid #696969; background: #f0f0f0; border-left: 1px solid #a0a0a0;`;
const MonHead = styled.div`height: 24px; display: flex; flex: none; border-top: 2px solid #777; padding-left: 1px; font-size: 14px; line-height: 20px; color: #000;`;
const MonTh = styled.div<{ $w: number }>`width: ${p => p.$w}px; border-right: 1px solid #888; border-bottom: 1px solid #888; padding-left: 7px; box-shadow: inset 1px 1px 0 #fff;`;
const MonBody = styled.div`height: 48px; background: #fff; border-left: 1px solid #999; flex: none;`;
const MonFoot = styled.div`display: flex; justify-content: flex-end; gap: 8px; padding: 8px 8px 0 0;`;

const StatusBar = styled.footer`height: 25px; flex: none; display: flex; gap: 4px; padding: 3px 0 1px 1058px; background: #f0f0f0;`;
const StatusCell = styled.div<{ $w: number }>`width: ${p => p.$w}px; flex: none; border: 1px solid #999; border-right-color: #fff; border-bottom-color: #fff; padding-left: 3px; display: flex; align-items: center; font-size: 15px; line-height: 22px; color: #222;`;

const menus: [string, number, number][] = [
  ["ﾌｧｲﾙ", 19, 32], ["編集", 18, 30], ["NC編集", 18, 50], ["表示", 18, 30], ["ﾜｲﾔｰﾌﾚｰﾑ", 18, 64], ["面", 18, 15],
  ["NC-ﾌﾟﾛｾｽ", 19, 66], ["NCﾕｰﾃｨﾘﾃｨ", 18, 75], ["ﾂｰﾙ", 19, 24], ["解析", 18, 30], ["ｶﾀﾛｸﾞ", 17, 37], ["ｳｨﾝﾄﾞｳ", 22, 48],
];

const params: [string, number, string?][] = [
  ["ｱﾌﾟﾛｰﾁとﾘﾄﾗｸﾄ", 106], ["計測ｻｲｸﾙ", 75, "btn"], ["ｱｸｼｮﾝ", 45], ["ｸﾘｱﾗﾝｽと座標系", 120], ["ｴﾝﾄﾘ点と終了点", 116],
  ["境界設定", 68], ["公差と面ｵﾌｾｯﾄ", 109], ["電極加工", 68], ["工具軌道", 68], ["工具軌道", 68, "btn"], ["工具軌道", 68, "btn"],
  ["水平加工拡張", 102], ["複数水平ﾚﾍﾞﾙ", 103, "chk"], ["Z 制限", 44], ["ｽﾛｯﾄ加工", 71], ["ﾚｲﾔ間加工", 82], ["ﾚｲﾔ間加工", 82],
  ["ﾚｲﾔ接続", 65], ["高速加工", 68], ["ﾊﾟｽ間削除", 77], ["表示と編集", 79], ["ﾄﾞﾘﾙﾊﾟﾗﾒｰﾀ", 85], ["深さﾊﾟﾗﾒｰﾀ", 82], ["ﾄﾞﾘﾙﾘﾄﾗｸﾄ", 74],
  ["Z-値", 36], ["ｼｬﾝｸとﾎﾙﾀﾞ", 84], ["ｽﾄｯｸ", 38], ["公差の制御方法", 96],
];

const leftItems: { i: React.ReactNode; t?: string; w?: number; dim?: boolean; line?: boolean }[] = [
  { i: <L1 /> }, { i: <L2 /> }, { i: <ToolI /> }, { i: <L4 /> }, { i: <L5 /> },
  { i: <BoxNew a="#dfffb0" b="#b8f890" l="#68a050" />, t: "ﾊﾟｰﾂ", w: 28 },
  { i: <BoxNew a="#ffdcb0" b="#ffcf98" l="#c07838" />, t: "ｽﾄｯｸ", w: 28 },
  { i: <L8 />, t: "工具軌跡", w: 55 },
  { i: <L9 />, t: "手続き", w: 37, dim: true },
  { i: <RunI />, t: "実行", w: 28 },
  { i: <FilterFolder />, t: "全体ﾌｨﾙﾀ", w: 56 },
  { i: <Wheel />, t: "ﾅﾋﾞｹﾞｰﾀ", w: 49, dim: true },
  { i: <SimI />, t: "加工ｼﾐｭﾚｰｼｮﾝ", w: 84 },
  { i: <RestI />, t: "残りｽﾄｯｸ", w: 52 },
  { i: <PostI />, t: "ﾎﾟｽﾄﾌﾟﾛｾｽ", w: 64, line: true },
  { i: <ReportI />, t: "NCﾚﾎﾟｰﾄ", w: 54 },
];

function Group({ w, gap = 3, more, children }: { w: number; gap?: number; more?: boolean; children: React.ReactNode }) {
  return (
    <GroupBox $w={w} $gap={gap}>
      <Grip />
      {children}
      {more && <Corner><Chevrons /></Corner>}
    </GroupBox>
  );
}
const Small = ({ ml, w = 21, items }: { ml: number; w?: number; items: React.ReactNode[] }) => (
  <Col $small $ml={ml} $w={w}>{items.map((it, k) => <Cell key={k} $h={29.3}>{it}</Cell>)}</Col>
);

function RibbonBar() {
  return (
    <Ribbon>
      <Group w={111}>
        <Col $ml={10} $w={90}><Cell><CadI /></Cell><RLabel $dim><Fit w={80}>CADﾓｰﾄﾞに切</Fit><Fit w={13}>替</Fit></RLabel></Col>
      </Group>
      <Group w={203}>
        <Col $ml={19} $w={150}>
          <Combo><Fit w={50}>MODEL</Fit><ComboBtn><Caret /></ComboBtn></Combo>
          <HRow $mt={11} $gap={10}><ToolSmall /><Fit w={121}>NC工具による座標系</Fit></HRow>
        </Col>
      </Group>
      <Group w={210}>
        <Col $ml={10} $w={94}><Cell><PathBulbBig /></Cell><RLabel><Fit w={84}>動作表示切替</Fit></RLabel></Col>
        <Col $w={45}><Cell $on><ToolBulb /></Cell><Cell><PathBulb /></Cell></Col>
        <Col $ml={4} $w={45} $line><Cell><CubeGrey /></Cell><Cell $on><CubePurple /></Cell></Col>
      </Group>
      <Group w={303} gap={4}>
        <Col $ml={13} $w={45}><Cell><TableGrey /></Cell><Cell $on><GanttI /></Cell></Col>
        <Col $ml={0} $w={45}><Cell><HelpGrey /></Cell><Cell><InfoGrey /></Cell></Col>
        <Col $ml={1} $w={45}><Cell $on><WindowI /></Cell><Cell><NcTable /></Cell></Col>
        <Col $w={8}><Cell /><Cell><Caret /></Cell></Col>
        <Col $ml={5} $w={48} $line><Cell><LinkUp /></Cell><Cell><LinkTree /></Cell></Col>
        <Col $ml={1} $w={48} $line><Cell><SetTab /></Cell><RLabel><Fit w={38}>ｾｯﾄﾀﾌﾞ</Fit></RLabel></Col>
        <Col $ml={6} $w={22}><Cell $h={28}><BlueBox /></Cell></Col>
      </Group>
      <Group w={116} gap={4}>
        <Col $ml={11} $w={48}><Cell><OffsetI /></Cell><RLabel><Fit w={35}>ｵﾌｾｯﾄ</Fit></RLabel></Col>
        <Col $ml={-2} $w={46}><Cell><SurfA /></Cell><Cell><SurfB /></Cell></Col>
      </Group>
      <Group w={133} gap={2}>
        <Col $ml={15} $w={40}><Cell><Sketch /></Cell><RLabel><Fit w={35}>ｽｹｯﾁｬ</Fit></RLabel></Col>
        <Col $ml={3} $w={60}><Cell><Composite /></Cell><RLabel><Fit w={56}>複合曲線</Fit></RLabel></Col>
      </Group>
      <Group w={101} gap={2}>
        <Col $ml={9} $w={82}><Cell><UcsCopy /></Cell><RLabel><Fit w={74}>座標系 ｺﾋﾟｰ</Fit></RLabel><Cell $h={40}><Caret /></Cell></Col>
      </Group>
      <Group w={119}>
        <Col $ml={13} $w={45}><Cell><Pocket /></Cell></Col>
        <Col $ml={3} $w={45} $line><Cell><DrillBox /></Cell><Cell $on><DrillBulb /></Cell></Col>
      </Group>
      <Group w={96} gap={4}>
        <Col $ml={15} $w={40}><Cell><Dim /></Cell><Cell><BigA /></Cell></Col>
        <Small ml={6} items={[<NoteI />, <DimGrey />, <AGrey />]} />
      </Group>
      <Group w={118} gap={2} more>
        <Col $ml={15} $w={40}><Cell><Dim ruler /></Cell></Col>
        <Col $ml={4} $w={45}><Cell><Rainbow /></Cell><Cell><PickFace /></Cell></Col>
      </Group>
      <Group w={71} gap={3} more>
        <Col $ml={13} $w={45}><Cell><ZoomWin /></Cell><Cell><ZoomObj /></Cell></Col>
      </Group>
      <Group w={78} gap={3} more>
        <Small ml={14} items={[0, 2, 4].map(n => <FaceCube key={n} n={n} />)} />
        <Small ml={5} items={[1, 3, 5].map(n => <FaceCube key={n} n={n} />)} />
      </Group>
      <Group w={50} gap={3}>
        <Small ml={14} items={[0, 1, 2].map(n => <TealCube key={n} n={n} />)} />
      </Group>
      <Group w={126} gap={0} more>
        <SwatchPanel>
          {["#ff0000", "#ffff00", "#0000ff", "#00ff00"].map(c => <Swatch key={c} $c={c} />)}
          <SwatchSide $row="1 / 4"><Current /><Rainbowed /></SwatchSide>
          {["#00ffff", "#ff00ff", "#ffffff", "#000000"].map(c => <Swatch key={c} $c={c} />)}
          <SwatchRule />
          {["#f0f0f0", "#fcc8cc", "#fce4bc", "#ffffc4"].map(c => <Swatch key={c} $c={c} />)}
          <SwatchSide $row="4 / 6"><Dropper /></SwatchSide>
          {["#dcecd0", "#ccfce0", "#acf0fc", "#b8ccfc"].map(c => <Swatch key={c} $c={c} />)}
        </SwatchPanel>
      </Group>
      <WinMini><Cross c="#7e9fc4" t={2.2} /><Restore c="#7e9fc4" /><Dash $c="#7e9fc4" $mt={7} /></WinMini>
    </Ribbon>
  );
}

function ProcessManager() {
  return (
    <Panel $h={285}>
      <PanelHead><Fit w={107}>NCﾌﾟﾛｾｽﾏﾈｰｼﾞｬ</Fit><Pin /></PanelHead>
      <Sunken>
        <ProcHead>
          <ProcTh><Fit w={29}>状態</Fit></ProcTh><ProcTh><Fit w={122}>工具軌跡/手続き名</Fit></ProcTh>
          <ProcTh /><ProcTh /><ProcTh><Fit w={9}>U</Fit></ProcTh><ProcTh><Fit w={8}>S</Fit></ProcTh><ProcTh><Fit w={30}>ｺﾒﾝﾄ</Fit></ProcTh>
          <ProcTh><Fit w={9}>C</Fit></ProcTh><ProcTh><Fit w={19}>ﾍﾟﾝ</Fit></ProcTh><ProcTh><Fit w={28}>工具</Fit></ProcTh><ProcTh><Fit w={28}>座標</Fit></ProcTh>
        </ProcHead>
        <ProcRow $h={18} $bold>
          <ProcStatus><ErrDot grid /></ProcStatus>
          <ProcCells $bold>
            <ProcName><Tree c="#000" /><Fit w={113}>NC_Setup (2 P)</Fit></ProcName>
            <Fit w={58}>No Text</Fit><i /><i /><ModCell>MODEL</ModCell>
          </ProcCells>
        </ProcRow>
        <ProcRow $h={18}>
          <ProcStatus><ErrDot /></ProcStatus>
          <ProcCells>
            <ProcName><Blank $w={14} /><Fit w={72}>目標ﾊﾟｰﾂ_2</Fit></ProcName>
            <Fit w={51}>No Text</Fit><i /><i /><ModCell $dim>MODEL</ModCell>
          </ProcCells>
        </ProcRow>
        <ProcRow $h={18}>
          <ProcStatus><ErrDot /></ProcStatus>
          <ProcCells $sel>
            <ProcName><Blank $w={12} /><Fit w={93}>ｽﾄｯｸ - 自動_3</Fit></ProcName>
            <Fit w={51}>No Text</Fit><ColorChip /><i /><ModCell $dim>MODEL</ModCell>
          </ProcCells>
        </ProcRow>
        <HScroll><Chevron d="l" /><HThumb /><Chevron d="r" /></HScroll>
      </Sunken>
    </Panel>
  );
}

function ParameterPanel() {
  return (
    <LowerPanel>
      <SelectArea>
        <SelLine><Fit w={53}>ﾒｲﾝ選択</Fit><At $ml={110}><Fit w={51}>ｻﾌﾞ選択</Fit></At></SelLine>
        <SelValues>
          <RoughI /><Fit w={70}>荒取り加工</Fit><At $ml={58}><Caret w={6} c="#666" /></At>
          <At $ml={6}><Spiral /></At><At $ml={3}><Fit w={44}>渦状荒</Fit></At><At $ml={135}><Caret w={6} c="#666" /></At>
        </SelValues>
        <Rule />
      </SelectArea>
      <ParamFrame>
        <ParamTable>
          <ParamHead><ParamTh><Fit w={52}>ﾊﾟﾗﾒｰﾀ</Fit></ParamTh><ParamTh><Fit w={15}>値</Fit></ParamTh></ParamHead>
          <ParamRow><ParamName $root><Tree /><Fit w={85}>動作ﾊﾟﾗﾒｰﾀ</Fit></ParamName></ParamRow>
          {params.map(([t, w, kind], k) => (
            <ParamRow key={k}>
              <ParamName><LockPin /><Tree plus /><Fit w={w}>{t}</Fit></ParamName>
              {kind === "btn" ? <ParamBtn /> : kind === "chk" ? <ParamChk /> : <i />}
            </ParamRow>
          ))}
        </ParamTable>
        <VScroll><Chevron d="u" /><VThumb /><Chevron d="d" /></VScroll>
      </ParamFrame>
    </LowerPanel>
  );
}

function ViewStrips() {
  const c = <Caret w={7} />;
  return (
    <Strips>
      <Strip $w={205}>
        <At $ml={6}><SelX /></At><At $ml={6}><SelCube /></At><VSep $ml={3} />
        <At $ml={3}><SelSurf /></At><At $ml={4}>{c}</At><At $ml={6}><SelFilter /></At><At $ml={4}>{c}</At>
        <At $ml={6}><SelRect plus /></At><At $ml={3}>{c}</At><At $ml={5}><SelRect /></At><At $ml={4}>{c}</At>
      </Strip>
      <Strip $w={237} $ml={39}>
        <At $ml={8}><BulbI c="#eee" b="#777" /></At><At $ml={12}><BulbI c="#ffcc10" b="#f09a00" /></At><At $ml={8}><BulbSwap /></At>
        <At $ml={8}><BulbSel /></At><At $ml={9}><ArrowG /></At><At $ml={11}><ArrowG r /></At><VSep $ml={8} />
        <At $ml={3}><ShadeCube /></At><At $ml={5}>{c}</At><At $ml={5}><WoodCube /></At><At $ml={4}>{c}</At>
      </Strip>
      <Strip $w={363} $ml={38}>
        <At $ml={4}><HookArrow /></At><At $ml={6}><FilterG d="M1 2H14L16 7L12 10L8 6L1 9Z" /></At><VSep $ml={4} $h={26} />
        <At $ml={4}><UcsFilter /></At><VSep $ml={4} $h={26} />
        <At $ml={4}><FilterG d="M1 2H7V8H1ZM11 8L14 2L18 8ZM2 12H10V18H1Z" /></At>
        <At $ml={6}><FilterG d="M1 10L10 1L17 3L8 12L4 16L1 13Z" /></At>
        <At $ml={6}><FilterG d="M1 14L4 4L9 7L14 3L19 8L14 7L9 10L5 8Z" /></At>
        <At $ml={6}><FilterG d="M1 10L10 1M3 14L13 4M8 18L1 10" /></At>
        <At $ml={7}><FilterG d="M1 2H16V6H11V14H6V6H1Z" /></At>
        <At $ml={6}><FilterG d="M1 15L8 4H19L12 15Z" /></At>
        <At $ml={6}><FilterG d="M2 1V9M17 1V9M2 5H17M1 18L6 10L9 18" /></At>
        <VSep $ml={5} $h={26} />
        <At $ml={3}><FilterG d="M1 1H4V6H1ZM3 6V16H8M8 8L15 2L10 10" /></At>
        <At $ml={6}><FilterG d="M1 6L6 2H18V12L13 17H5L1 13ZM1 6H12V16M12 6L18 2" /></At>
        <VSep $ml={4} $h={26} />
        <At $ml={4}><FilterG d="M1 2L13 13M13 2L2 14M5 5H9V9H5Z" /></At>
        <At $ml={4}><Ico w={4} h={9}><path d="M0 0L4 4.5L0 9Z" fill="#000" /></Ico></At>
      </Strip>
    </Strips>
  );
}

const Triad = ({ y }: { y: number }) => (
  <g transform={`translate(1432.3 ${y})`} stroke="#2a08c8" strokeWidth="1.1" fill="none">
    <circle r="2.3" /><path d="M-1-3V-24M1-3V-24M-5-24H5L0-44Z" />
    <path d="M1-4L12-16M3-2L15-14M9-18L18-11L23-26Z" />
    <path d="M4 0L27 6M4 2L26 9M25 13L29 3L47 13Z" />
    <g fill="#0a08e0" stroke="none" fontFamily="Liberation Sans, sans-serif" fontSize="22">
      <text x="-6.5" y="-57">Z</text><text x="23" y="-34.5">Y</text><text x="54" y="18">X</text>
    </g>
  </g>
);

function ModelScene() {
  return (
    <Scene width="1214" height="699" viewBox="700 135 1214 699">
      <g stroke="#000" strokeWidth="1.2" strokeLinejoin="round">
        <path d="M1390.3 327.3L1558.3 374L1474.3 467.3L1306.7 420.7Z" fill="#875b3f" />
        <path d="M1306.7 420.7L1474.3 467.3V623.3L1306.7 577Z" fill="#c88860" />
        <path d="M1474.3 467.3L1558.3 374V530.7L1474.3 623.3Z" fill="#6d4b34" />
      </g>
      <g fontFamily="Liberation Sans, sans-serif" fontSize="20" fill="#1408d8">
        <text x="1431" y="419.5" textLength="34" lengthAdjust="spacingAndGlyphs" stroke="#1408d8" strokeWidth=".4">sita</text>
        <text x="1432" y="575.5" fontSize="21.5" fill="#f00000" textLength="72" lengthAdjust="spacingAndGlyphs">MODEL</text>
        <text x="1431" y="575" textLength="23" lengthAdjust="spacingAndGlyphs" stroke="#1408d8" strokeWidth=".4">ue</text>
      </g>
      <Triad y={398.5} />
      <Triad y={554.5} />
      <path d="M888 680H898V692H888Z" fill="#1a2ad0" />
      <path d="M899 684H911L903 694L897 692Z" fill="#0a8a1a" />
      <circle cx="892.5" cy="698.5" r="10" fill="#f5ee20" />
      <circle cx="889" cy="695" r="4.5" fill="#fbf77c" />
      <path d="M902 696L952 711L950 719L900 705Z" fill="#f00808" />
      <path d="M957 706L975 721.5L950 725Z" fill="#f00808" />
      <path d="M950 725L951 718L975 721.5Z" fill="#a80000" />
      <text x="986" y="737" fontFamily="Liberation Sans, sans-serif" fontSize="16" fill="#f01818">X</text>
    </Scene>
  );
}

function UcsDialog() {
  const rows: [string, number][] = [["MODEL", 47], ["ue", 14], ["sita", 22]];
  return (
    <Dialog>
      <DlgTitle><UcsFilter w={20} /><Fit w={92}>座標系ﾏﾈｰｼﾞｬ</Fit><Cross s={14} t={1.1} /></DlgTitle>
      <List>
        <ListHead><ListHeadMain><BlueArrow /><BlueArrow r /></ListHeadMain><ListHeadCell /><ListHeadCell /></ListHead>
        {rows.map(([t, w], k) => (
          <ListRow key={t} $red={k === 0}>
            <UcsRow /><At $ml={6}><Fit w={w}>{t}</Fit></At>
            <RowTools><Ico w={12} h={17} vb="0 0 12 17"><BulbP c="#ffd840" b="#e8a000" /></Ico><MiniCheck /></RowTools>
          </ListRow>
        ))}
      </List>
      <DlgBottom>
        <Radios>
          <Radio><Ring /><Fit w={74}>座標系選択</Fit></Radio>
          <Radio $dim><Ring $dim /><Fit w={119}>ｺﾝﾎﾟｰﾈﾝﾄから選択</Fit></Radio>
          <Radio $indent><Ring $on /><Fit w={193}>有効ｺﾝﾎﾟｰﾈﾝﾄの座標系すべて</Fit></Radio>
        </Radios>
        <BtnGrid>
          <Btn><SmallBulb c="#ffee20" /></Btn><Btn><SmallBulb c="#888" /></Btn><Btn><UcsGrey /></Btn><Btn><CursorX /></Btn>
          <Btn $c={3}><Check /></Btn><Btn $c={4}><ExitI /></Btn>
        </BtnGrid>
      </DlgBottom>
      <Highlight />
    </Dialog>
  );
}

function Output() {
  return (
    <OutPanel>
      <BarHead><Fit w={29}>出力</Fit><HeadTools $gap={12}><Pin /><Cross s={10} t={2.2} /></HeadTools></BarHead>
      <OutBody>
        <Fit w={715}>*  c:¥programdata¥3d systems¥cimatron¥15.0¥data¥it¥var¥profiles¥Default_ENCTemplate.tpt から読込んだﾃﾝﾌﾟﾚｰﾄ</Fit>
        <OutScroll><Chevron d="u" c="#b8b8b8" /><Chevron d="d" c="#b8b8b8" /></OutScroll>
      </OutBody>
      <OutTabs><OutTab><Fit w={30}>情報</Fit></OutTab></OutTabs>
    </OutPanel>
  );
}

function ExecMonitor() {
  const cols: [string, number, number][] = [["工具軌跡...", 84, 69], ["手続き", 60, 41], ["ｺﾒﾝﾄ", 60, 29], ["工具", 85, 29], ["座標系", 60, 45], ["状態", 120, 30], ["進捗", 60, 29]];
  return (
    <Monitor>
      <BarHead><Fit w={81}>NC実行ﾓﾆﾀｰ</Fit><Pin /></BarHead>
      <MonHead>{cols.map(([t, w, f]) => <MonTh key={t} $w={w}><Fit w={f}>{t}</Fit></MonTh>)}</MonHead>
      <MonBody />
      <MonFoot><Btn $w={32} $h={30}><StopGrey /></Btn><Btn $w={32} $h={30}><ExitBlue /></Btn></MonFoot>
    </Monitor>
  );
}

export default function App() {
  const c = <Caret w={7} />;
  return (
    <Screen>
      <Global />
      <TitleBar>
        <CiLogo />
        <QuickAccess>
          <At><SaveI /></At><At $ml={6}><OpenI /></At><VSep $ml={4} />
          <At $ml={3}><NewPart /></At><At $ml={4}>{c}</At><At $ml={4}><NewAsm /></At><At $ml={4}>{c}</At>
          <At $ml={5}><NewDrw /></At><At $ml={4}>{c}</At><At $ml={5}><NewNC /></At><At $ml={4}>{c}</At><VSep $ml={4} />
          <At $ml={3}><CopyX /></At><VSep $ml={4} /><At $ml={2}><Undo /></At><At $ml={2}>{c}</At>
          <At $ml={4}><Undo flip /></At><At $ml={2}>{c}</At><At $ml={4}><GreySwap /></At><VSep $ml={3} /><At $ml={4}><TableBlue /></At>
        </QuickAccess>
        {menus.map(([t, ml, w]) => <At key={t} $ml={ml}><Fit w={w}>{t}</Fit></At>)}
        <At $ml={227}><Fit w={166}>ﾊﾟｰﾂ0_NC : NC-Standard</Fit></At>
        <At $ml={223}><SearchBox><Fit w={30}>検索</Fit><Ico w={18} h={19}><circle cx="7.5" cy="7.5" r="6" stroke="#222" strokeWidth="2" /><path d="M12 12L17 18" stroke="#222" strokeWidth="2.6" /></Ico></SearchBox></At>
        <At $ml={13}><Dash $c="#fff" $mt={2} /></At>
        <At $ml={22}><Restore /></At>
        <At $ml={23}><Cross c="#fff" s={13} t={2.4} /></At>
      </TitleBar>
      <RibbonBar />
      <Workspace>
        <LeftBar>
          <DockTabs><DockTab $w={9} $c="#fff" /><DockTab $w={14} $c="#fdcb87" /></DockTabs>
          <LeftInner>
            <HGrip />
            {leftItems.map((it, k) => (
              <Item key={k} $label={!!it.t} $dim={it.dim} $line={it.line}>
                <ItemIcon>{it.i}</ItemIcon>{it.t && <Fit w={it.w!}>{it.t}</Fit>}
              </Item>
            ))}
            <More><Chevrons /></More>
          </LeftInner>
        </LeftBar>
        <LeftPanels>
          <ProcessManager />
          <Divider />
          <ParameterPanel />
        </LeftPanels>
        <RightSide>
          <Viewport>
            <ViewStrips />
            <ModelScene />
            <UcsDialog />
          </Viewport>
          <Output />
          <ExecMonitor />
        </RightSide>
      </Workspace>
      <StatusBar>
        <StatusCell $w={271} /><StatusCell $w={101} /><StatusCell $w={101} /><StatusCell $w={101} />
        <StatusCell $w={201}><Fit w={163}>ﾊﾟｰﾂ0_NC : NC-Standard</Fit></StatusCell>
        <StatusCell $w={80}><Fit w={58}>単位:mm</Fit></StatusCell>
      </StatusBar>
    </Screen>
  );
}
